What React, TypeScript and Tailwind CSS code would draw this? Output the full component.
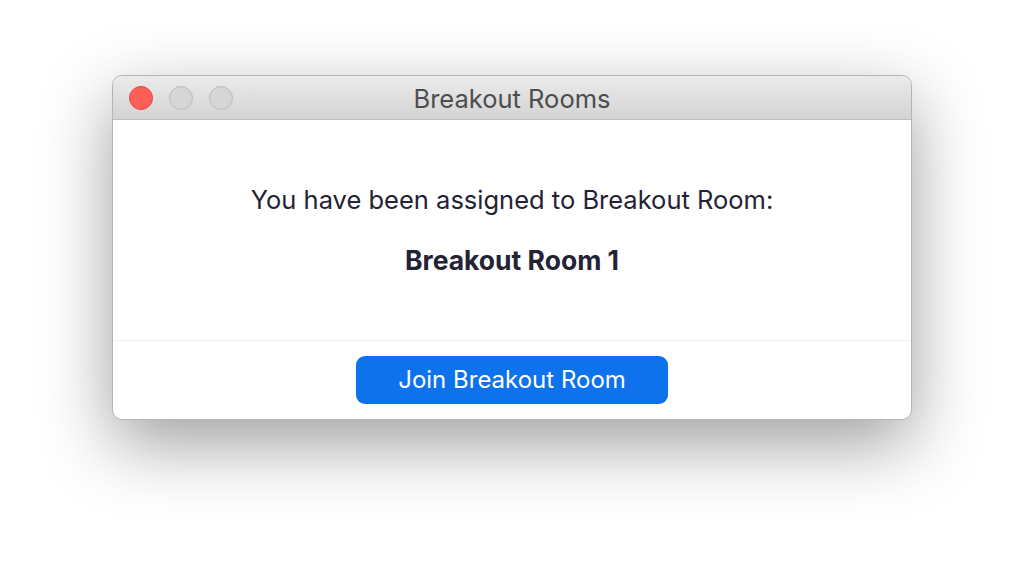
import React from "react";

function TrafficLights() {
  return (
    <div className="flex items-center gap-4 pl-4">
      <span className="w-6 h-6 rounded-full bg-[#fe5f57] border border-[#e2463f]" />
      <span className="w-6 h-6 rounded-full bg-[#d6d6d6] border border-[#bdbdbd]" />
      <span className="w-6 h-6 rounded-full bg-[#d6d6d6] border border-[#bdbdbd]" />
    </div>
  );
}

export default function App() {
  return (
    <div
      className="w-[1024px] h-[568px] bg-white flex justify-center pt-[75px]"
      style={{ fontFamily: "Inter, 'Noto Sans', sans-serif" }}
    >
      <div className="w-[800px] h-[345px] flex flex-col rounded-[10px] overflow-hidden bg-white border border-[#b4b4b4] shadow-[0_24px_70px_rgba(0,0,0,0.38)]">
        {/* Title bar */}
        <div className="relative h-[44px] shrink-0 flex items-center bg-gradient-to-b from-[#ebebeb] to-[#d4d4d4] border-b border-[#bfbfbf]">
          <TrafficLights />
          <div className="absolute inset-0 flex items-center justify-center pt-[3px] text-[25.5px] text-[#4d4d4d]">
            Breakout Rooms
          </div>
        </div>

        {/* Body */}
        <div className="h-[221px] shrink-0 flex flex-col items-center pt-[64px] gap-[28px] text-[#232333] border-b border-[#ededf4]">
          <p className="text-[25.5px] leading-[32px]">You have been assigned to Breakout Room:</p>
          <p className="text-[26.5px] leading-[32px] font-bold">Breakout Room 1</p>
        </div>

        {/* Footer */}
        <div className="flex-1 flex items-center justify-center">
          <button className="w-[312px] h-[48px] rounded-[9px] bg-[#0e72ed] text-white text-[24px]">
            Join Breakout Room
          </button>
        </div>
      </div>
    </div>
  );
}
